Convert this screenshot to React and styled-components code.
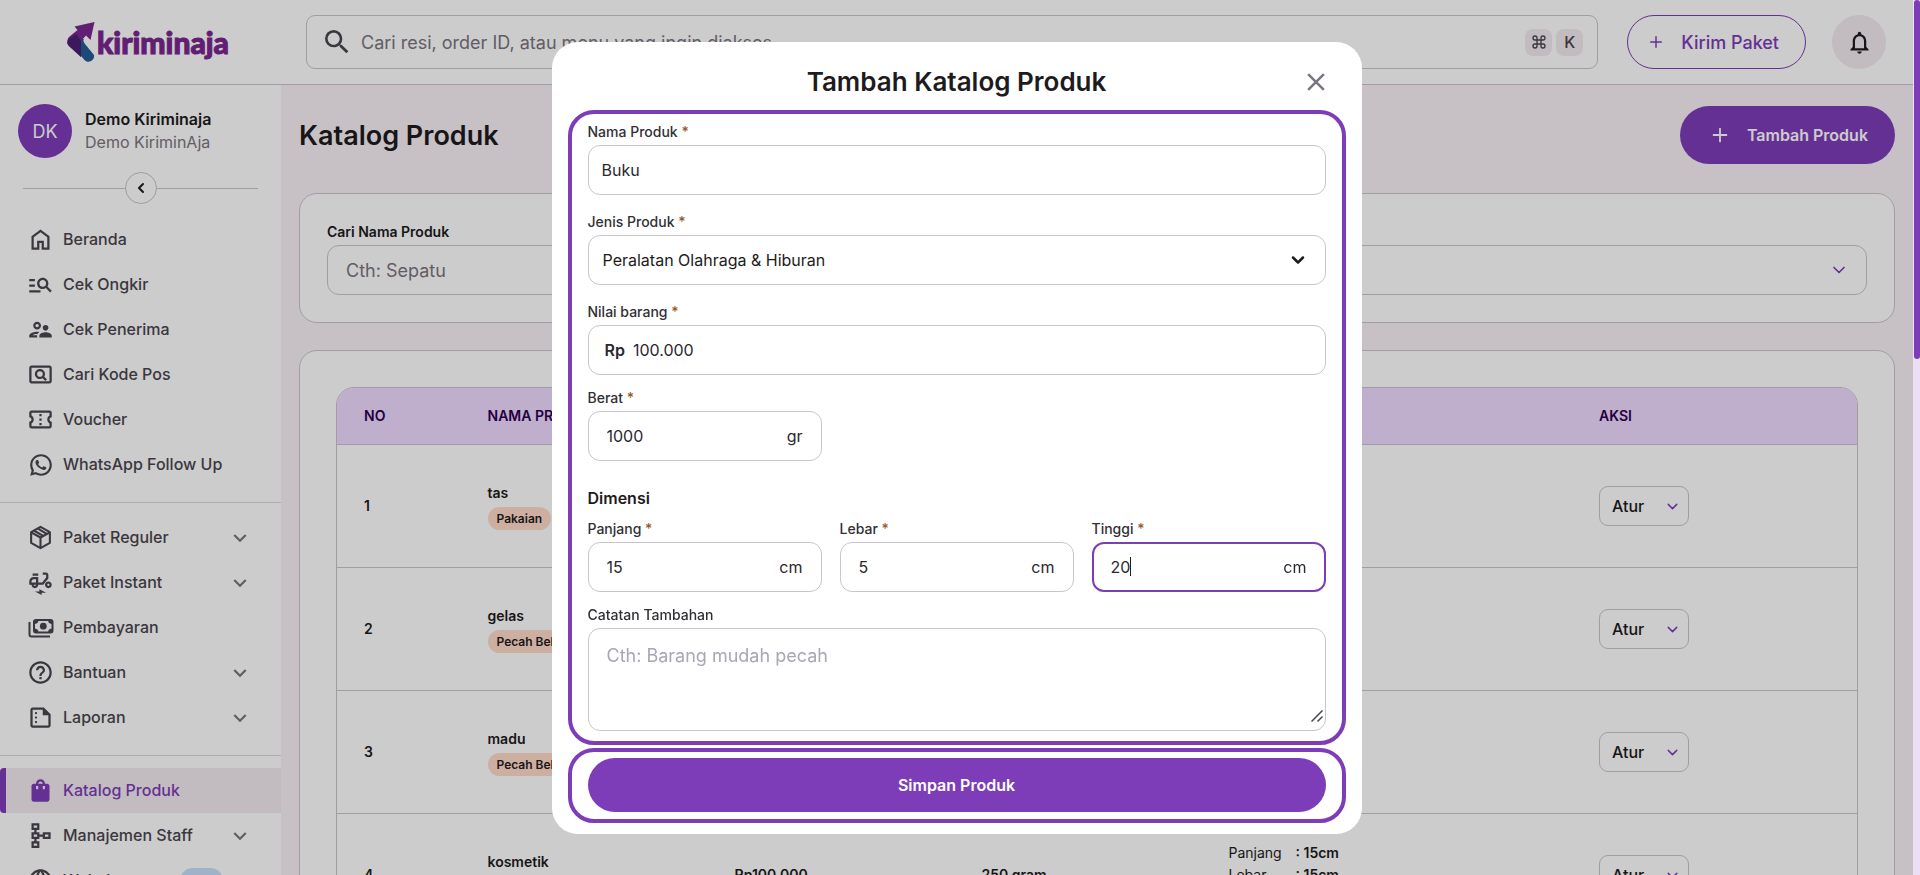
import { useEffect, useRef, useState } from "react";
import styled, { createGlobalStyle } from "styled-components";
import {
  MdClose,
  MdExpandMore,
  MdHelpOutline,
  MdLanguage,
  MdManageSearch,
  MdNotificationsNone,
  MdOutlineConfirmationNumber,
  MdOutlineElectricMoped,
  MdOutlinePageview,
  MdOutlineSchema,
  MdOutlineSummarize,
  MdOutlineSupervisorAccount,
  MdSearch,
  MdShoppingBag,
} from "react-icons/md";
import { RiWhatsappLine } from "react-icons/ri";
import { ChevronDown, ChevronLeft, Command, Plus } from "lucide-react";

const purple = "#7d3cb8";
const outline = "#cbc4cf";
const ink = "#1d1b20";

const GlobalStyle = createGlobalStyle`
  * {
    box-sizing: border-box;
  }
  body {
    margin: 0;
    font-family: Inter, "Liberation Sans", sans-serif;
    font-size: 16px;
    color: ${ink};
    overflow: hidden;
  }
  button, input, select, textarea {
    font: inherit;
    color: inherit;
  }
  a {
    color: inherit;
    text-decoration: none;
  }
`;

const Page = styled.div`
  display: flex;
  height: 100vh;
  overflow: hidden;
`;
const Shell = styled.div`
  position: relative;
  flex: 1;
  min-width: 0;
  overflow: hidden;
  background: #fff;
`;
const ScrollTrack = styled.div`
  width: 7px;
  padding-left: 1px;
  background: #ecdff5;
`;
const ScrollThumb = styled.div`
  height: 41%;
  border-radius: 3px;
  background: ${purple};
`;

/* top bar */
const Header = styled.header`
  display: flex;
  align-items: center;
  height: 85px;
  padding-right: 27px;
  border-bottom: 1px solid ${outline};
`;
const LogoLink = styled.a`
  display: flex;
  align-items: center;
  gap: 2px;
  width: 306px;
  padding-left: 67px;
`;
const LogoText = styled.span`
  font-family: Lato, sans-serif;
  font-size: 30px;
  line-height: 32px;
  font-weight: 900;
  color: #7a2690;
  -webkit-text-stroke: 1px #7a2690;
`;
const SearchBar = styled.label`
  display: flex;
  align-items: center;
  flex: 1;
  height: 54px;
  padding: 0 14px;
  border: 1px solid ${outline};
  border-radius: 9px;
  color: #4a454e;
`;
const SearchInput = styled.input`
  flex: 1;
  min-width: 0;
  padding: 0 8px;
  border: none;
  outline: none;
  background: transparent;
  font-size: 18px;
  &::placeholder {
    color: #7b757f;
    opacity: 1;
  }
`;
const Key = styled.kbd`
  display: grid;
  place-items: center;
  width: 27px;
  height: 27px;
  margin-left: 4px;
  border-radius: 8px;
  background: #f3ebf1;
  font-family: inherit;
  font-size: 16px;
  font-weight: 500;
`;
const SendButton = styled.button`
  display: flex;
  align-items: center;
  gap: 16px;
  height: 54px;
  margin: 0 26px 0 29px;
  padding: 0 26px 0 19px;
  border: 1px solid ${purple};
  border-radius: 27px;
  background: transparent;
  color: ${purple};
  font-size: 18px;
  font-weight: 500;
`;
const BellButton = styled.button`
  display: grid;
  place-items: center;
  width: 54px;
  height: 54px;
  border: none;
  border-radius: 27px;
  background: #f3ebf1;
`;

/* side bar */
const Body = styled.div`
  display: flex;
  align-items: stretch;
`;
const Sidebar = styled.aside`
  width: 281px;
  flex-shrink: 0;
  padding-top: 19px;
`;
const Profile = styled.div`
  display: flex;
  align-items: center;
  gap: 13px;
  padding-left: 18px;
  line-height: 23px;
`;
const Avatar = styled.div`
  display: grid;
  place-items: center;
  width: 54px;
  height: 54px;
  border-radius: 27px;
  background: ${purple};
  color: #fff;
  font-size: 18px;
`;
const ProfileName = styled.div`
  font-weight: 600;
`;
const ProfileShop = styled.div`
  color: #7b757f;
`;
const Collapse = styled.div`
  display: flex;
  align-items: center;
  margin: 14px 23px 13px;
  &::before,
  &::after {
    content: "";
    flex: 1;
    height: 1px;
    background: ${outline};
  }
`;
const CollapseButton = styled.button`
  display: grid;
  place-items: center;
  width: 32px;
  height: 32px;
  padding: 0;
  border: 1px solid ${outline};
  border-radius: 16px;
  background: #fff;
`;
const NavItem = styled.a`
  display: flex;
  align-items: center;
  gap: 9px;
  height: 45px;
  padding: 0 28px 0 ${(p) => (p.$active ? "21px" : "27px")};
  border-left: ${(p) => (p.$active ? `6px solid ${purple}` : "none")};
  border-radius: ${(p) => (p.$active ? "4px 0 0 4px" : "0")};
  background: ${(p) => (p.$active ? "#f3ebf1" : "transparent")};
  color: ${(p) => (p.$active ? purple : "#4a454e")};
  font-weight: 500;
`;
const NavLabel = styled.span`
  flex: 1;
  padding-bottom: 2px;
`;
const NavLine = styled.hr`
  height: 1px;
  margin: 15px 0 12px;
  border: none;
  background: #e0d6e2;
`;
const NavBadge = styled.span`
  width: 43px;
  height: 25px;
  margin-right: 30px;
  border-radius: 13px;
  background: #c7e0fa;
`;

/* content */
const Main = styled.main`
  flex: 1;
  min-width: 0;
  padding: 21px 18px 0;
  background: #f9f2f8;
`;
const TitleRow = styled.div`
  display: flex;
  align-items: center;
  justify-content: space-between;
  margin-bottom: 29px;
`;
const PageTitle = styled.h1`
  margin: 0;
  font-size: 27px;
  font-weight: 600;
`;
const AddButton = styled.button`
  display: flex;
  align-items: center;
  gap: 16px;
  height: 58px;
  padding: 0 27px 0 29px;
  border: none;
  border-radius: 29px;
  background: ${purple};
  color: #fff;
  font-weight: 600;
`;
const Card = styled.section`
  margin-bottom: 27px;
  padding: ${(p) => p.$pad};
  border: 1px solid ${outline};
  border-radius: 18px;
  background: #fff;
`;
const FilterGrid = styled.div`
  display: grid;
  grid-template-columns: 1fr 1fr;
  gap: 18px;
`;
const FieldLabel = styled.label`
  display: block;
  margin-bottom: 5px;
  font-size: 14px;
  line-height: 16px;
  color: ${(p) => (p.$strong ? ink : "#322f35")};
  font-weight: ${(p) => (p.$strong ? 600 : 500)};
`;
const FilterInput = styled.input`
  display: block;
  width: 100%;
  height: 50px;
  padding: 0 18px;
  border: 1px solid ${outline};
  border-radius: 12px;
  background: transparent;
  font-size: 18px;
  &::placeholder {
    color: #7b757f;
    opacity: 1;
  }
`;
/* the select and its arrow share one grid cell */
const SelectWrap = styled.div`
  display: grid;
  grid-template-columns: ${(p) => p.$width || "1fr"};
  align-items: center;
  color: ${(p) => p.$arrow || ink};
  > * {
    grid-area: 1 / 1;
  }
  > svg {
    justify-self: end;
    margin-right: ${(p) => p.$inset || "18px"};
    pointer-events: none;
  }
`;
const Select = styled.select`
  appearance: none;
  width: 100%;
  height: ${(p) => (p.$small ? "40px" : "50px")};
  padding: 0 ${(p) => (p.$small ? "12px" : "14px")};
  border: 1px solid ${outline};
  border-radius: ${(p) => (p.$small ? "9px" : "12px")};
  background: transparent;
  color: ${ink};
  font-size: 16px;
  font-weight: ${(p) => (p.$small ? 500 : 400)};
`;
const TableFrame = styled.div`
  overflow: hidden;
  border: 1px solid ${outline};
  border-radius: 18px 18px 0 0;
`;
const Table = styled.table`
  width: 100%;
  table-layout: fixed;
  border-collapse: separate;
  border-spacing: 0;
  font-size: 14px;
  line-height: 22px;
  text-align: left;
  th {
    height: 57px;
    padding: 0 27px;
    border-bottom: 1px solid ${outline};
    background: #efdaff;
    color: #2c0051;
    font-weight: 600;
  }
  td {
    height: 123px;
    padding: 0 27px;
    border-bottom: 1px solid ${outline};
    font-weight: 600;
  }
`;
const Col = styled.col`
  width: ${(p) => p.$w};
`;
const Category = styled.span`
  display: table;
  margin-top: 3px;
  padding: 0 9px;
  border-radius: 12px;
  background: #ffdbca;
  font-size: 12px;
  line-height: 23px;
`;
const Size = styled.div`
  display: grid;
  grid-template-columns: 67px 1fr;
`;
const SizeName = styled.span`
  font-weight: 400;
`;

/* dialog */
const Backdrop = styled.div`
  position: absolute;
  inset: 0;
  display: grid;
  place-items: center;
  background: rgba(0, 0, 0, 0.2);
`;
const Dialog = styled.div`
  width: min(810px, 100%);
  padding: 12px 16px 11px;
  border-radius: 26px;
  background: #fff;
`;
const DialogHead = styled.div`
  display: grid;
  grid-template-columns: 1fr auto 1fr;
  align-items: center;
  height: 56px;
  padding: 0 15px;
`;
const DialogTitle = styled.h2`
  grid-column: 2;
  margin: 0;
  font-size: 26px;
  font-weight: 600;
`;
const CloseButton = styled.button`
  display: grid;
  justify-self: end;
  padding: 0;
  border: none;
  background: transparent;
  color: #7b757f;
`;
const Frame = styled.div`
  padding: ${(p) => p.$pad};
  border: 4px solid ${purple};
  border-radius: 26px;
  & + & {
    margin-top: 3px;
  }
`;
const Field = styled.div`
  margin-top: ${(p) => p.$top || "0"};
`;
const Star = styled.span`
  color: #99562b;
`;
const InputBox = styled.div`
  display: flex;
  align-items: center;
  height: 50px;
  padding: 0 ${(p) => p.$pad || "18px"};
  border: 1px solid ${outline};
  border-radius: 12px;
  color: #2b2830;
  &:focus-within {
    padding: 0 17px;
    border: 2px solid ${purple};
  }
`;
const Input = styled.input`
  flex: 1;
  width: 0;
  padding: 0;
  border: none;
  outline: none;
  background: transparent;
`;
/* grows with its value so the caret can stand right after it */
const GrowInput = styled(Input)`
  flex: none;
  width: auto;
  field-sizing: content;
  caret-color: transparent;
`;
const Caret = styled.span`
  width: 1px;
  height: 19px;
  background: ${ink};
`;
const Unit = styled.span`
  margin-left: auto;
`;
const Prefix = styled.span`
  margin-right: 8px;
  font-weight: 600;
`;
const ThreeCols = styled.div`
  display: grid;
  grid-template-columns: repeat(3, 1fr);
  gap: 18px;
  margin-top: ${(p) => p.$top};
`;
const SubTitle = styled.h3`
  margin: 27px 0 0;
  font-size: 16px;
  line-height: 20px;
  font-weight: 600;
`;
const NotesWrap = styled.div`
  display: grid;
  > * {
    grid-area: 1 / 1;
  }
  > svg {
    place-self: end;
    margin: 0 3px 9px 0;
    pointer-events: none;
  }
`;
const Notes = styled.textarea`
  width: 100%;
  height: 103px;
  padding: 16px 18px;
  border: 1px solid ${outline};
  border-radius: 12px;
  outline: none;
  font-size: 18px;
  line-height: 22px;
  resize: none;
  &::placeholder {
    color: #aaa6b2;
    opacity: 1;
  }
`;
const SaveButton = styled.button`
  display: block;
  width: 100%;
  height: 54px;
  border: none;
  border-radius: 27px;
  background: ${purple};
  color: #fff;
  font-weight: 600;
`;

const Logo = () => (
  <svg width="28" height="40" viewBox="0 0 28 40" aria-hidden="true">
    <path d="M14 17v17l4 4.500c4 3.500 10-.5 9-5.500L18 22q-2.500-3-1-5z" fill="#245c96" />
    <path d="M27.500 0L7.500 4.500l3 3.500L2 15c-2.500 3-2 7 0 9l12 11V19l5-5.500 4.500 4.500z" fill="#7a2690" />
    <path d="M9 12l-7 5c-2.500 3-2 5 0 7l12 11V19z" fill="#4a2074" />
  </svg>
);

const HomeIcon = () => (
  <svg width="27" height="27" viewBox="0 0 24 24" fill="currentColor">
    <path d="M6 19h3v-6h6v6h3v-9l-6-4.500L6 10v9zm-2 2V9l8-6 8 6v12h-7v-6h-2v6H4z" />
  </svg>
);

const PackageIcon = () => (
  <svg width="25" height="25" viewBox="0 0 24 24" fill="none" stroke="currentColor" strokeWidth="2" strokeLinejoin="round">
    <path d="M12 1.800l9 5v10.400l-9 5-9-5V6.800z" />
    <path d="M3 7l9 5 9-5M12 12v10M6 5.500l8.500 5M9.500 3.500l8.500 5" />
  </svg>
);

const MoneyIcon = () => (
  <svg width="26" height="24" viewBox="0 0 26 24" fill="none" stroke="currentColor" strokeWidth="2">
    <path d="M1.500 6v12.500a2 2 0 0 0 2 2H22" />
    <rect x="6" y="4" width="18.500" height="12.500" rx="2" />
    <circle cx="15.300" cy="10.200" r="3.400" fill="currentColor" stroke="none" />
    <path d="M6 4h4.500c0 2.500-1.500 4-4.500 4zM24.500 4H20c0 2.500 1.500 4 4.500 4zM6 16.500h4.500c0-2.500-1.500-4-4.500-4zM24.500 16.500H20c0-2.500 1.500-4 4.500-4z" fill="currentColor" stroke="none" />
  </svg>
);

const Grip = () => (
  <svg width="12" height="12" viewBox="0 0 12 12" fill="none" stroke="#4a454e" strokeWidth="1.500">
    <path d="M.5 11.500l11-11M6.500 11.500l5-5" />
  </svg>
);

const menu = [
  [
    { label: "Beranda", icon: <HomeIcon /> },
    { label: "Cek Ongkir", icon: <MdManageSearch size={27} /> },
    { label: "Cek Penerima", icon: <MdOutlineSupervisorAccount size={27} /> },
    { label: "Cari Kode Pos", icon: <MdOutlinePageview size={27} /> },
    { label: "Voucher", icon: <MdOutlineConfirmationNumber size={27} /> },
    { label: "WhatsApp Follow Up", icon: <RiWhatsappLine size={26} /> },
  ],
  [
    { label: "Paket Reguler", icon: <PackageIcon />, more: true },
    { label: "Paket Instant", icon: <MdOutlineElectricMoped size={27} />, more: true },
    { label: "Pembayaran", icon: <MoneyIcon /> },
    { label: "Bantuan", icon: <MdHelpOutline size={27} />, more: true },
    { label: "Laporan", icon: <MdOutlineSummarize size={27} />, more: true },
  ],
  [
    { label: "Katalog Produk", icon: <MdShoppingBag size={27} />, active: true },
    { label: "Manajemen Staff", icon: <MdOutlineSchema size={27} />, more: true },
    { label: "Website", icon: <MdLanguage size={27} />, badge: true },
  ],
];

const IconSlot = styled.span`
  display: grid;
  place-items: center;
  width: 27px;
  flex-shrink: 0;
`;

const products = [
  { name: "tas", category: "Pakaian" },
  { name: "gelas", category: "Pecah Belah" },
  { name: "madu", category: "Pecah Belah" },
  { name: "kosmetik", category: "Kosmetik" },
];

const TopBar = () => (
  <Header>
    <LogoLink href="#">
      <Logo />
      <LogoText>kiriminaja</LogoText>
    </LogoLink>
    <SearchBar>
      <MdSearch size={32} />
      <SearchInput type="search" placeholder="Cari resi, order ID, atau menu yang ingin diakses" />
      <Key>
        <Command size={16} />
      </Key>
      <Key>K</Key>
    </SearchBar>
    <SendButton>
      <Plus size={18} strokeWidth={2} />
      Kirim Paket
    </SendButton>
    <BellButton aria-label="Notifikasi">
      <MdNotificationsNone size={27} />
    </BellButton>
  </Header>
);

const SideMenu = () => (
  <Sidebar>
    <Profile>
      <Avatar>DK</Avatar>
      <div>
        <ProfileName>Demo Kiriminaja</ProfileName>
        <ProfileShop>Demo KiriminAja</ProfileShop>
      </div>
    </Profile>
    <Collapse>
      <CollapseButton aria-label="Tutup menu">
        <ChevronLeft size={16} strokeWidth={3} />
      </CollapseButton>
    </Collapse>
    <nav>
      {menu.map((group, i) => (
        <div key={i}>
          {i > 0 && <NavLine />}
          {group.map((item) => (
            <NavItem key={item.label} href="#" $active={item.active}>
              <IconSlot>{item.icon}</IconSlot>
              <NavLabel>{item.label}</NavLabel>
              {item.badge && <NavBadge />}
              {item.more && <MdExpandMore size={26} color="#7b757f" />}
            </NavItem>
          ))}
        </div>
      ))}
    </nav>
  </Sidebar>
);

const Catalog = () => (
  <Main>
    <TitleRow>
      <PageTitle>Katalog Produk</PageTitle>
      <AddButton>
        <Plus size={22} />
        Tambah Produk
      </AddButton>
    </TitleRow>
    <Card $pad="30px 27px 27px">
      <FilterGrid>
        <div>
          <FieldLabel htmlFor="filter-name" $strong>
            Cari Nama Produk
          </FieldLabel>
          <FilterInput id="filter-name" placeholder="Cth: Sepatu" />
        </div>
        <div>
          <FieldLabel htmlFor="filter-type" $strong>
            Jenis Produk
          </FieldLabel>
          <SelectWrap $arrow={purple}>
            <Select id="filter-type">
              <option>Semua</option>
            </Select>
            <ChevronDown size={20} />
          </SelectWrap>
        </div>
      </FilterGrid>
    </Card>
    <Card $pad="36px 36px 0">
      <TableFrame>
        <Table>
          <colgroup>
            <Col $w="8.125%" />
            <Col $w="16.25%" />
            <Col $w="16.25%" />
            <Col $w="16.25%" />
            <Col $w="24.375%" />
            <Col />
          </colgroup>
          <thead>
            <tr>
              <th>NO</th>
              <th>NAMA PRODUK</th>
              <th>HARGA</th>
              <th>BERAT</th>
              <th>DIMENSI</th>
              <th>AKSI</th>
            </tr>
          </thead>
          <tbody>
            {products.map((product, i) => (
              <tr key={product.name}>
                <td>{i + 1}</td>
                <td>
                  {product.name}
                  <Category>{product.category}</Category>
                </td>
                <td>Rp100.000</td>
                <td>250 gram</td>
                <td>
                  {["Panjang", "Lebar", "Tinggi"].map((side) => (
                    <Size key={side}>
                      <SizeName>{side}</SizeName>
                      <span>: 15cm</span>
                    </Size>
                  ))}
                </td>
                <td>
                  <SelectWrap $width="90px" $inset="8px" $arrow={purple}>
                    <Select $small aria-label={`Atur ${product.name}`}>
                      <option>Atur</option>
                    </Select>
                    <ChevronDown size={17} />
                  </SelectWrap>
                </td>
              </tr>
            ))}
          </tbody>
        </Table>
      </TableFrame>
    </Card>
  </Main>
);

const RequiredLabel = ({ id, children }) => (
  <FieldLabel htmlFor={id}>
    {children} <Star>*</Star>
  </FieldLabel>
);

const ProductDialog = () => {
  const [values, setValues] = useState({
    name: "Buku",
    price: "100.000",
    weight: "1000",
    length: "15",
    width: "5",
    height: "20",
    notes: "",
  });
  const [typing, setTyping] = useState(false);
  const heightRef = useRef(null);

  useEffect(() => {
    heightRef.current.focus();
  }, []);

  const bind = (key) => ({
    id: key,
    value: values[key],
    onChange: (event) => setValues({ ...values, [key]: event.target.value }),
  });

  return (
    <Backdrop>
      <Dialog role="dialog" aria-labelledby="dialog-title">
        <DialogHead>
          <DialogTitle id="dialog-title">Tambah Katalog Produk</DialogTitle>
          <CloseButton aria-label="Tutup">
            <MdClose size={30} />
          </CloseButton>
        </DialogHead>
        <Frame $pad="10px 16px">
          <Field>
            <RequiredLabel id="name">Nama Produk</RequiredLabel>
            <InputBox $pad="13px">
              <Input {...bind("name")} />
            </InputBox>
          </Field>
          <Field $top="19px">
            <RequiredLabel id="type">Jenis Produk</RequiredLabel>
            <SelectWrap>
              <Select id="type">
                <option>Peralatan Olahraga &amp; Hiburan</option>
              </Select>
              <ChevronDown size={20} strokeWidth={3} />
            </SelectWrap>
          </Field>
          <Field $top="19px">
            <RequiredLabel id="price">Nilai barang</RequiredLabel>
            <InputBox $pad="16px">
              <Prefix>Rp</Prefix>
              <Input {...bind("price")} />
            </InputBox>
          </Field>
          <ThreeCols $top="15px">
            <Field>
              <RequiredLabel id="weight">Berat</RequiredLabel>
              <InputBox>
                <Input {...bind("weight")} />
                <Unit>gr</Unit>
              </InputBox>
            </Field>
          </ThreeCols>
          <SubTitle>Dimensi</SubTitle>
          <ThreeCols $top="13px">
            <Field>
              <RequiredLabel id="length">Panjang</RequiredLabel>
              <InputBox>
                <Input {...bind("length")} />
                <Unit>cm</Unit>
              </InputBox>
            </Field>
            <Field>
              <RequiredLabel id="width">Lebar</RequiredLabel>
              <InputBox>
                <Input {...bind("width")} />
                <Unit>cm</Unit>
              </InputBox>
            </Field>
            <Field>
              <RequiredLabel id="height">Tinggi</RequiredLabel>
              <InputBox>
                <GrowInput
                  ref={heightRef}
                  {...bind("height")}
                  onFocus={() => setTyping(true)}
                  onBlur={() => setTyping(false)}
                />
                {typing && <Caret />}
                <Unit>cm</Unit>
              </InputBox>
            </Field>
          </ThreeCols>
          <Field $top="15px">
            <FieldLabel htmlFor="notes">Catatan Tambahan</FieldLabel>
            <NotesWrap>
              <Notes placeholder="Cth: Barang mudah pecah" {...bind("notes")} />
              <Grip />
            </NotesWrap>
          </Field>
        </Frame>
        <Frame $pad="6px 16px 7px">
          <SaveButton>Simpan Produk</SaveButton>
        </Frame>
      </Dialog>
    </Backdrop>
  );
};

export default function App() {
  return (
    <Page>
      <GlobalStyle />
      <Shell>
        <TopBar />
        <Body>
          <SideMenu />
          <Catalog />
        </Body>
        <ProductDialog />
      </Shell>
      <ScrollTrack>
        <ScrollThumb />
      </ScrollTrack>
    </Page>
  );
}
